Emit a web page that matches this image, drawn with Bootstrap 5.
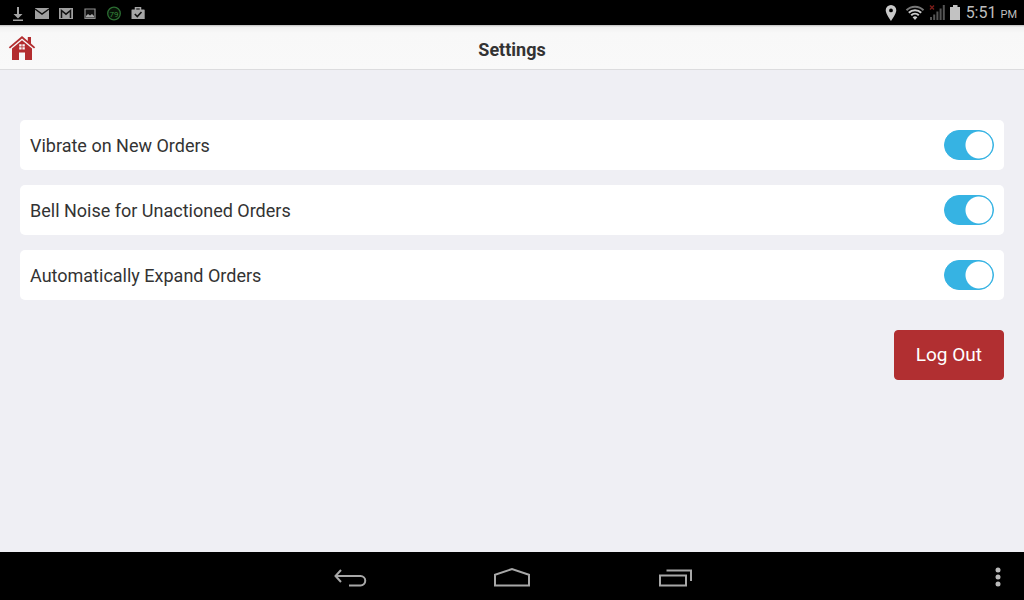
<!DOCTYPE html>
<html lang="en">
<head>
<meta charset="utf-8">
<meta name="viewport" content="width=device-width, initial-scale=1">
<title>Settings</title>
<link href="https://cdn.jsdelivr.net/npm/bootstrap@5.3.0/dist/css/bootstrap.min.css" rel="stylesheet">
<style>
  body { font-family: Roboto, "Liberation Sans", sans-serif; font-size: 18px; line-height: 24px; color: #333; background: #efeff4; }
  svg { display: block; flex: none; }
  .status-bar { height: 25px; padding: 0 7px 0 6px; background: #000; color: #bebebe; }
  .clock { padding-top: 2px; font-size: 16px; line-height: 24px; }
  .clock-period { font-size: 11px; }
  .title-bar { height: 45px; padding: 2px 8px 0; background: linear-gradient(#bbb 0, #f1f1f1 2px, #f8f8f8 8px, #f9f9f9); border-bottom: 1px solid #dcdcde; }
  .title-bar h1 { font-size: 18px; line-height: 24px; }
  .side-cell { width: 28px; }
  .settings { padding: 50px 20px 20px; }
  .setting-list { gap: 15px; margin-bottom: 30px; }
  .setting-row { height: 50px; padding: 0 10px; background: #fff; border-radius: 5px; }
  .setting-row label { padding-top: 2px; }
  .form-switch .form-check-input.toggle {
    width: 50px; height: 30px; border: 1px solid #36b3e3; border-radius: 15px; box-shadow: none; cursor: pointer;
    background: #fff radial-gradient(circle, #ddd 13px, transparent 14px) left center / 28px 28px no-repeat;
  }
  .form-switch .form-check-input.toggle:checked {
    background: #36b3e3 radial-gradient(circle, #fff 13px, transparent 14px) right center / 28px 28px no-repeat;
  }
  .btn-logout {
    --bs-btn-color: #fff; --bs-btn-bg: #b12f31; --bs-btn-border-color: #b12f31;
    --bs-btn-hover-color: #fff; --bs-btn-hover-bg: #9c282a; --bs-btn-hover-border-color: #9c282a;
    --bs-btn-font-size: 19px; --bs-btn-line-height: 24px; --bs-btn-padding-y: 12px; --bs-btn-padding-x: 21px;
    --bs-btn-border-radius: 4px;
  }
  .system-nav { height: 48px; padding-top: 1px; background: #000; }
  .system-nav .btn { --bs-btn-padding-x: 0; --bs-btn-padding-y: 0; --bs-btn-border-width: 0; }
  .nav-key { width: 162px; }
  .side-key { width: 52px; }
</style>
</head>
<body class="d-flex flex-column min-vh-100">

<div class="status-bar d-flex align-items-center justify-content-between">
  <div class="d-flex align-items-center">
    <svg width="24" height="24" viewBox="0 0 24 24" fill="#a4a4a4"><path d="M11 6h2v7h3.500l-4.500 4.500-4.500-4.500H11zM7 18.500h10v1.500H7z"/></svg>
    <svg width="24" height="24" viewBox="0 0 24 24"><path d="M5 7h14v11H5z" fill="#a0a0a0"/><path d="M5 8l7 5 7-5" fill="none" stroke="#111" stroke-width="1.500"/></svg>
    <svg width="24" height="24" viewBox="0 0 24 24"><path d="M5 7h14v11H5z" fill="#a0a0a0"/><path d="M7.500 17V9.500l4.500 3.700 4.500-3.700V17" fill="none" stroke="#111" stroke-width="1.500"/></svg>
    <svg width="24" height="24" viewBox="0 0 24 24"><path d="M7 8h10v9.500H7z" fill="#111" stroke="#909090" stroke-width="1.200"/><path d="M8 16.500v-1.500l2-2 2 1.500 2-1.500 2 2v1.500z" fill="#aaa"/></svg>
    <svg width="24" height="24" viewBox="0 0 24 24"><circle cx="12" cy="12.500" r="6.300" fill="#071207" stroke="#2c6e33" stroke-width="1.300"/><text x="12" y="15.500" text-anchor="middle" font-size="8" fill="#35873b">79</text></svg>
    <svg width="24" height="24" viewBox="0 0 24 24"><path d="M6 8.500h12a.7.7 0 0 1 .7.700V18H5.500V9.200a.7.7 0 0 1 .5-.7z" fill="#a6a6a6"/><path d="M9.500 9V6.800h5V9" fill="none" stroke="#a6a6a6" stroke-width="1.500"/><path d="M8.800 13l2.500 2.500 4.200-4.500" fill="none" stroke="#111" stroke-width="1.600"/></svg>
  </div>
  <div class="d-flex align-items-center">
    <svg width="78" height="24" viewBox="0 0 78 24">
      <path fill="#c9c9c9" fill-rule="evenodd" d="M7 4a5.300 5.300 0 0 0-5.300 5.300C1.700 13 7 20 7 20s5.300-7 5.300-10.700A5.300 5.300 0 0 0 7 4zm0 3.500a1.900 1.900 0 1 1 0 3.800 1.900 1.900 0 0 1 0-3.800z"/>
      <g fill="none" stroke-width="2"><path d="M22.500 9.200a12 12 0 0 1 17 0" stroke="#777"/><path d="M24.800 11.800a9 9 0 0 1 12.400 0M27.200 14.300a5.500 5.500 0 0 1 7.600 0" stroke="#ccc"/></g>
      <path d="M31 19l-2.400-2.700a3.600 3.600 0 0 1 4.800 0z" fill="#ccc"/>
      <path fill="#555" d="M46 16h2v3h-2zM49.200 13.500h2V19h-2zM52.400 10.500h2V19h-2zM55.600 7.500h2V19h-2zM58.800 4h2v15h-2z"/>
      <path d="M46 4.500l4 4m0-4l-4 4" stroke="#7b1d1a" stroke-width="1.400"/>
      <path fill="#c2c2c2" d="M69 4h4.500v2H76v13H66V6h3z"/>
    </svg>
    <div class="clock ms-1">5:51 <span class="clock-period">PM</span></div>
  </div>
</div>

<header class="title-bar d-flex align-items-center justify-content-between">
  <a href="#" class="side-cell" aria-label="Home">
    <svg width="28" height="26" viewBox="0 0 28 26" fill="#b32d2f">
      <path d="M14 1L.8 12.200l1.200 1.400L14 3.600l12 10 1.200-1.400-4.200-3.600V2h-3.200v3.900z"/>
      <path fill-rule="evenodd" d="M14 5.200L4 13.600V25h7v-7.500h6V25h7V13.600zM11.200 9.300h2.400v2.200h-2.400zM14.400 9.300h2.400v2.200h-2.400zM11.200 12.300h2.400v2.200h-2.400zM14.400 12.300h2.400v2.200h-2.400z"/>
    </svg>
  </a>
  <h1 class="m-0 pt-1 fw-bold">Settings</h1>
  <span class="side-cell"></span>
</header>

<main class="settings flex-grow-1 d-flex flex-column">
  <div class="setting-list d-flex flex-column">
    <div class="setting-row d-flex align-items-center justify-content-between">
      <label for="vibrate">Vibrate on New Orders</label>
      <div class="form-switch d-flex p-0"><input class="form-check-input toggle m-0" type="checkbox" role="switch" id="vibrate" checked></div>
    </div>
    <div class="setting-row d-flex align-items-center justify-content-between">
      <label for="bell">Bell Noise for Unactioned Orders</label>
      <div class="form-switch d-flex p-0"><input class="form-check-input toggle m-0" type="checkbox" role="switch" id="bell" checked></div>
    </div>
    <div class="setting-row d-flex align-items-center justify-content-between">
      <label for="expand">Automatically Expand Orders</label>
      <div class="form-switch d-flex p-0"><input class="form-check-input toggle m-0" type="checkbox" role="switch" id="expand" checked></div>
    </div>
  </div>
  <button type="button" class="btn btn-logout align-self-end">Log Out</button>
</main>

<nav class="system-nav d-flex justify-content-between" aria-label="System">
  <span class="side-key"></span>
  <div class="d-flex">
    <button type="button" class="btn nav-key d-flex align-items-center justify-content-center" aria-label="Back">
      <svg width="36" height="24" viewBox="0 0 36 24" fill="none" stroke="#a8a8a8" stroke-width="2"><path d="M9 5L3.500 11 9 17M3.500 11h25a4.700 4.700 0 0 1 0 9.500H17"/></svg>
    </button>
    <button type="button" class="btn nav-key d-flex align-items-center justify-content-center" aria-label="Home screen">
      <svg width="36" height="24" viewBox="0 0 36 24" fill="none" stroke="#a8a8a8" stroke-width="2"><path d="M1 20.500V9.800L18 4l17 5.800v10.700z"/></svg>
    </button>
    <button type="button" class="btn nav-key d-flex align-items-center justify-content-center" aria-label="Recent apps">
      <svg width="36" height="24" viewBox="0 0 36 24" fill="none" stroke="#a8a8a8" stroke-width="2"><path d="M4 10.500h26v10H4zM10.500 5.500H35V16"/></svg>
    </button>
  </div>
  <button type="button" class="btn side-key d-flex align-items-center justify-content-center" aria-label="More options">
    <svg width="8" height="24" viewBox="0 0 8 24" fill="#bababa"><circle cx="4" cy="5" r="2.500"/><circle cx="4" cy="12" r="2.500"/><circle cx="4" cy="19" r="2.500"/></svg>
  </button>
</nav>

<script src="https://cdn.jsdelivr.net/npm/bootstrap@5.3.0/dist/js/bootstrap.bundle.min.js"></script>
</body>
</html>
